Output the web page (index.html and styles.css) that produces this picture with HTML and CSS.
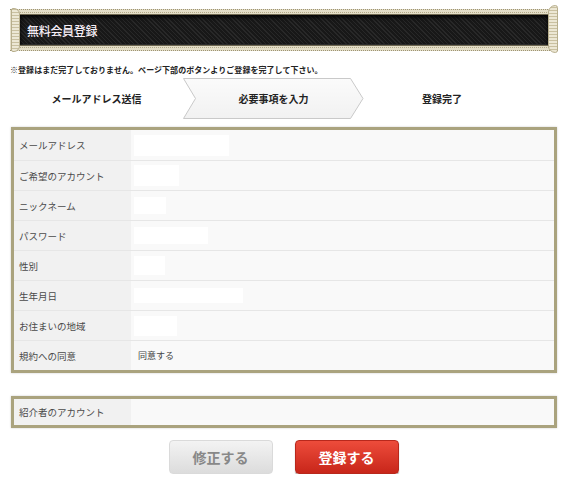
FILE: index.html
```html
<!DOCTYPE html>
<html lang="ja">
<head>
  <meta charset="utf-8" />
  <title>無料会員登録</title>
  <link rel="stylesheet" href="styles.css">
</head>
<body>
<div id="signup">
  <div class="titleFrame">
    <span class="curl curlLeft"></span>
    <span class="curl curlRight"></span>
    <div class="titleBar">
      <h1>無料会員登録</h1>
    </div>
  </div>

  <p class="notice">※登録はまだ完了しておりません。ページ下部のボタンよりご登録を完了して下さい。</p>

  <div class="steps">
    <div class="step">メールアドレス送信</div>
    <div class="step current">
      <svg class="arrow" width="181" height="41" viewBox="0 0 181 41">
        <defs>
          <linearGradient id="arrowFill" x1="0" y1="0" x2="0" y2="1">
            <stop offset="0" stop-color="#fbfbfb" />
            <stop offset="1" stop-color="#f1f1f1" />
          </linearGradient>
        </defs>
        <polygon points="0.5,0.5 167.5,0.5 180,20.5 167.5,40.5 0.5,40.5 12.5,20.5" fill="url(#arrowFill)" stroke="#c9c9c9" stroke-width="1" />
      </svg>
      <span>必要事項を入力</span>
    </div>
    <div class="step">登録完了</div>
  </div>

  <div class="formTable">
    <div class="formRow">
      <div class="label">メールアドレス</div>
      <div class="field"><span class="blank" style="width: 95px; height: 21px;"></span></div>
    </div>
    <div class="formRow">
      <div class="label">ご希望のアカウント</div>
      <div class="field"><span class="blank" style="width: 45px; height: 21px;"></span></div>
    </div>
    <div class="formRow">
      <div class="label">ニックネーム</div>
      <div class="field"><span class="blank" style="width: 32px; height: 17px;"></span></div>
    </div>
    <div class="formRow">
      <div class="label">パスワード</div>
      <div class="field"><span class="blank" style="width: 74px; height: 17px;"></span></div>
    </div>
    <div class="formRow">
      <div class="label">性別</div>
      <div class="field"><span class="blank" style="width: 31px; height: 19px;"></span></div>
    </div>
    <div class="formRow">
      <div class="label">生年月日</div>
      <div class="field"><span class="blank" style="width: 109px; height: 15px;"></span></div>
    </div>
    <div class="formRow">
      <div class="label">お住まいの地域</div>
      <div class="field"><span class="blank" style="width: 43px; height: 20px;"></span></div>
    </div>
    <div class="formRow">
      <div class="label">規約への同意</div>
      <div class="field">同意する</div>
    </div>
  </div>

  <div class="formTable single">
    <div class="formRow">
      <div class="label">紹介者のアカウント</div>
      <div class="field"></div>
    </div>
  </div>

  <div class="buttons">
    <button type="button" class="btn back">修正する</button>
    <button type="button" class="btn submit">登録する</button>
  </div>
</div>
</body>
</html>
```

FILE: styles.css
```css
* { margin: 0; padding: 0; box-sizing: border-box; }
body { background: #fff; color: #444; font-family: "Noto Sans CJK JP", "Noto Sans", sans-serif; }
#signup { width: 570px; }

/* title banner */
.titleFrame { position: relative; margin: 9px 12px 0 10px; height: 42px; padding: 4px 9px; background: #e4dec8; border-top: 1px dotted #9d9474; border-bottom: 1px dotted #9d9474; }
.titleBar { height: 32px; border: 1px solid #6f6850; outline: 1px dotted #b3aa88; outline-offset: 1px; background: repeating-linear-gradient(45deg, #282828 0 1px, #181818 1px 3px); box-shadow: inset 0 2px 4px #000, inset 0 -1px 0 #333; display: flex; align-items: center; }
.titleBar h1 { color: #f6eef6; font-size: 12px; font-weight: 500; padding-left: 7px; letter-spacing: -0.3px; }
.curl { position: absolute; width: 9px; border: 1px solid #b7ae8c; background: repeating-linear-gradient(0deg, #ece7d4 0 2px, #c9c0a0 2px 3px); }
.curlLeft { left: 1px; top: -2px; bottom: -2px; border-radius: 2px 6px 6px 2px; }
.curlRight { right: 0; top: -5px; bottom: -3px; width: 10px; border-radius: 8px 3px 3px 8px; }

.notice { font-size: 8px; font-weight: bold; color: #222; margin: 13px 0 0 10px; line-height: 12px; letter-spacing: 0.05px; }

/* progress steps */
.steps { display: grid; grid-template-columns: 173px 181px 156px; height: 41px; margin: 2px 0 0 10px; }
.step { display: flex; align-items: center; justify-content: center; font-size: 10px; font-weight: bold; color: #222; position: relative; }
.step.current span { position: relative; }
.arrow { position: absolute; left: 0; top: 0; }

/* form tables */
.formTable { margin: 8px 13px 0 11px; border: 3px solid #aaa37e; box-shadow: inset 0 0 0 1px #dcd7c0, 0 0 2px #ccc; background: #f9f9f9; }
.formRow { display: grid; grid-template-columns: 117px 1fr; height: 30px; border-top: 1px solid #e6e6e6; }
.formRow:first-child { border-top: 0; height: 30px; }
.label { background: #f1f1f1; font-size: 9.5px; color: #4a4a4a; display: flex; align-items: center; padding-left: 5px; }
.field { background: #f9f9f9; font-size: 9px; color: #444; display: flex; align-items: center; padding-left: 7px; }
.blank { display: block; background: #fff; margin-left: -4px; }
.formTable.single { margin-top: 23px; }
.single .formRow { height: 26px; }

/* buttons */
.buttons { display: flex; justify-content: center; gap: 22px; margin-top: 12px; padding-right: 3px; }
.btn { width: 104px; height: 34px; border-radius: 4px; font-family: "Noto Sans CJK JP", sans-serif; font-size: 14px; font-weight: bold; cursor: pointer; }
.back { background: linear-gradient(#f3f3f3, #dcdcdc); border: 1px solid #dadada; color: #888; }
.submit { background: linear-gradient(#ed4c3b, #c8261a); border: 1px solid #b8281c; color: #fff; box-shadow: 0 1px 1px #999; }
```
